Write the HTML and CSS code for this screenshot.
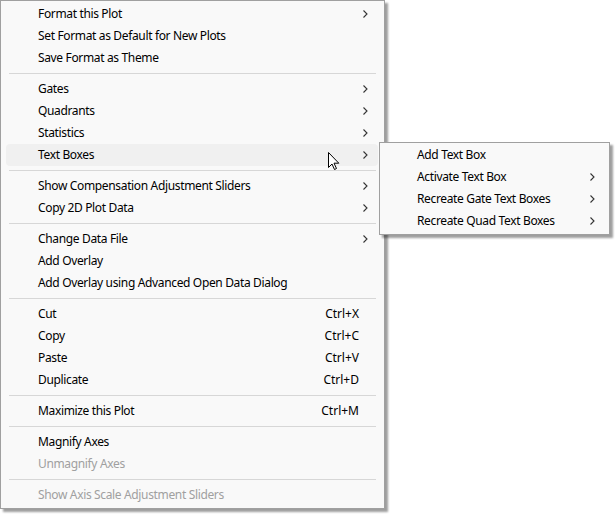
FILE: index.html
```html
<!DOCTYPE html>
<html>
<head>
<meta charset="utf-8">
<link rel="stylesheet" href="styles.css">
</head>
<body>
<div class="stage">
  <div class="menu main">
    <div class="row"><span class="label">Format this Plot</span><span class="key"></span><span class="arrow"><svg width="5" height="8" viewBox="0 0 5 8"><polyline points="0.5,0.5 4,4 0.5,7.5"/></svg></span></div>
    <div class="row"><span class="label">Set Format as Default for New Plots</span></div>
    <div class="row"><span class="label">Save Format as Theme</span></div>
    <div class="sep"></div>
    <div class="row"><span class="label">Gates</span><span class="key"></span><span class="arrow"><svg width="5" height="8" viewBox="0 0 5 8"><polyline points="0.5,0.5 4,4 0.5,7.5"/></svg></span></div>
    <div class="row"><span class="label">Quadrants</span><span class="key"></span><span class="arrow"><svg width="5" height="8" viewBox="0 0 5 8"><polyline points="0.5,0.5 4,4 0.5,7.5"/></svg></span></div>
    <div class="row"><span class="label">Statistics</span><span class="key"></span><span class="arrow"><svg width="5" height="8" viewBox="0 0 5 8"><polyline points="0.5,0.5 4,4 0.5,7.5"/></svg></span></div>
    <div class="row active"><span class="label">Text Boxes</span><span class="key"></span><span class="arrow"><svg width="5" height="8" viewBox="0 0 5 8"><polyline points="0.5,0.5 4,4 0.5,7.5"/></svg></span></div>
    <div class="sep"></div>
    <div class="row"><span class="label">Show Compensation Adjustment Sliders</span><span class="key"></span><span class="arrow"><svg width="5" height="8" viewBox="0 0 5 8"><polyline points="0.5,0.5 4,4 0.5,7.5"/></svg></span></div>
    <div class="row"><span class="label">Copy 2D Plot Data</span><span class="key"></span><span class="arrow"><svg width="5" height="8" viewBox="0 0 5 8"><polyline points="0.5,0.5 4,4 0.5,7.5"/></svg></span></div>
    <div class="sep"></div>
    <div class="row"><span class="label">Change Data File</span><span class="key"></span><span class="arrow"><svg width="5" height="8" viewBox="0 0 5 8"><polyline points="0.5,0.5 4,4 0.5,7.5"/></svg></span></div>
    <div class="row"><span class="label">Add Overlay</span></div>
    <div class="row"><span class="label">Add Overlay using Advanced Open Data Dialog</span></div>
    <div class="sep"></div>
    <div class="row"><span class="label">Cut</span><span class="key">Ctrl+X</span></div>
    <div class="row"><span class="label">Copy</span><span class="key">Ctrl+C</span></div>
    <div class="row"><span class="label">Paste</span><span class="key">Ctrl+V</span></div>
    <div class="row"><span class="label">Duplicate</span><span class="key">Ctrl+D</span></div>
    <div class="sep"></div>
    <div class="row"><span class="label">Maximize this Plot</span><span class="key">Ctrl+M</span></div>
    <div class="sep"></div>
    <div class="row"><span class="label">Magnify Axes</span></div>
    <div class="row disabled"><span class="label">Unmagnify Axes</span></div>
    <div class="sep"></div>
    <div class="row disabled"><span class="label">Show Axis Scale Adjustment Sliders</span></div>
  </div>

  <div class="menu sub">
    <div class="row"><span class="label">Add Text Box</span></div>
    <div class="row"><span class="label">Activate Text Box</span><span class="key"></span><span class="arrow"><svg width="5" height="8" viewBox="0 0 5 8"><polyline points="0.5,0.5 4,4 0.5,7.5"/></svg></span></div>
    <div class="row"><span class="label">Recreate Gate Text Boxes</span><span class="key"></span><span class="arrow"><svg width="5" height="8" viewBox="0 0 5 8"><polyline points="0.5,0.5 4,4 0.5,7.5"/></svg></span></div>
    <div class="row"><span class="label">Recreate Quad Text Boxes</span><span class="key"></span><span class="arrow"><svg width="5" height="8" viewBox="0 0 5 8"><polyline points="0.5,0.5 4,4 0.5,7.5"/></svg></span></div>
  </div>

  <svg class="cursor" width="12" height="19" viewBox="0 0 12 19">
    <path d="M0.5,0.5 L0.5,15.5 L4,12 L6.5,17.5 L8.5,16.5 L6,11.2 L10.8,11.2 Z" fill="#ffffff" stroke="#000000" stroke-width="1" stroke-linejoin="miter"/>
  </svg>
</div>
</body>
</html>
```

FILE: styles.css
```css
html, body {
  margin: 0;
  padding: 0;
  background: #ffffff;
}

body {
  font-family: "Noto Sans", "Open Sans", "Liberation Sans", sans-serif;
  font-size: 12px;
  letter-spacing: -0.35px;
  color: #000000;
}

.stage {
  position: relative;
  width: 615px;
  height: 515px;
}

.menu {
  background: #f9f9f9;
  border: 1px solid #a0a0a0;
  box-shadow: 3px 3px 2px rgba(0, 0, 0, 0.38);
  box-sizing: border-box;
}

.main {
  width: 385px;
  padding: 2px 6px 2px 5px;
}

.sub {
  position: absolute;
  left: 379px;
  top: 142px;
  width: 231px;
  padding: 1px 5px 2px 5px;
}

.row {
  display: grid;
  grid-template-columns: 1fr auto 19px;
  align-items: center;
  height: 22px;
  padding-left: 32px;
  border-radius: 4px;
  white-space: nowrap;
}

.row.active {
  background: #f0f0f0;
}

.row.disabled {
  color: #a0a0a0;
}

.label {
  grid-column: 1;
  padding-bottom: 2px;
}

.key {
  grid-column: 2;
  text-align: right;
  padding-bottom: 2px;
  letter-spacing: 0;
}

.arrow {
  grid-column: 3;
  display: flex;
  align-items: center;
  padding-left: 4px;
}

.sub .arrow {
  padding-left: 5px;
}

.arrow svg {
  display: block;
}

.arrow polyline {
  fill: none;
  stroke: #333333;
  stroke-width: 1.1;
}

.sep {
  height: 1px;
  margin: 4px 2px 4px 3px;
  background: #d7d7d7;
}

.cursor {
  position: absolute;
  left: 328px;
  top: 152px;
}
```
